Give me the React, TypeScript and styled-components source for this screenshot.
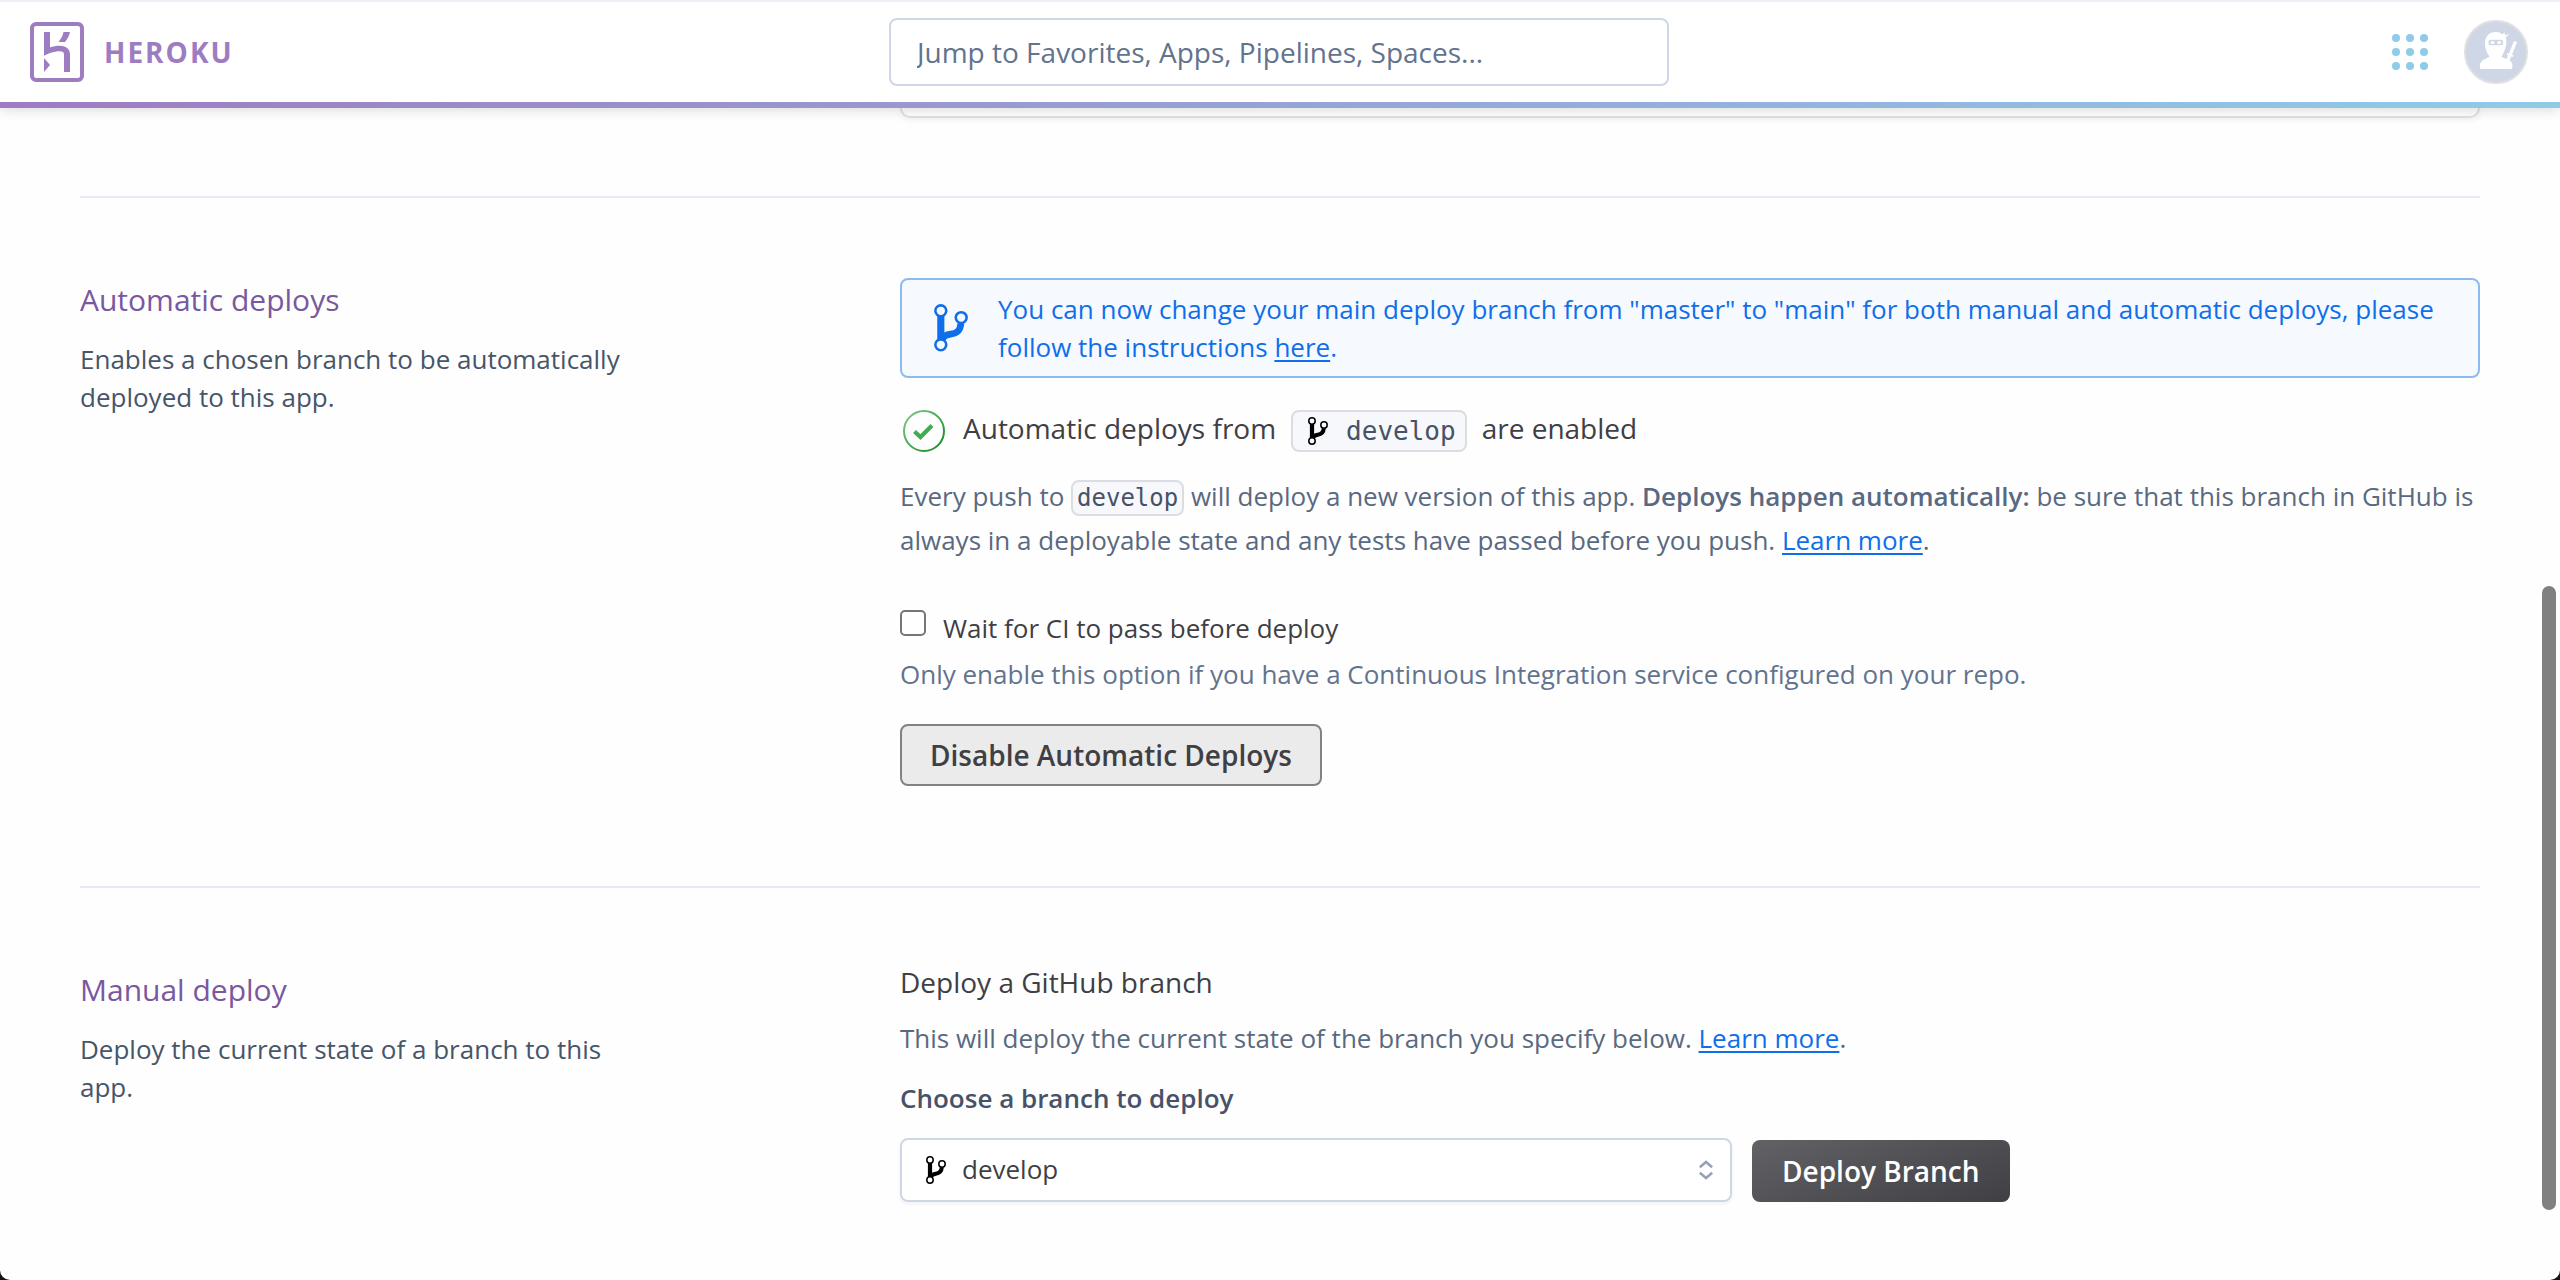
import React from "react";
import styled, { createGlobalStyle } from "styled-components";

const sans = `"Open Sans", "Noto Sans", sans-serif`;
const mono = `"DejaVu Sans Mono", monospace`;

const GlobalStyle = createGlobalStyle`
  *, *::before, *::after { box-sizing: border-box; }
  html { background: #101414; }
  body { margin: 0; font: 400 26px/38px ${sans}; color: #3f3f44; }
  h2, h3, p { margin: 0; font-weight: 400; }
`;

const Shell = styled.div`
  min-height: 100vh;
  background: #fefefe;
  border-radius: 0 0 10px 10px;
`;

const TopBar = styled.header`
  position: sticky;
  top: 0;
  z-index: 2;
  display: grid;
  grid-template-columns: 1fr minmax(0, 780px) 1fr;
  align-items: center;
  height: 108px;
  padding: 0 32px 0 30px;
  background: #fff;
  border-top: 2px solid #edf1f7;
  border-bottom: 6px solid;
  border-image: linear-gradient(90deg, #9e7cc1, #8fcbe8) 0 0 6 0;
  box-shadow: 0 2px 12px rgba(0, 0, 0, 0.14);
`;

const TopRule = styled.div`
  height: 2px;
  background: #edf1f7;
  position: absolute;
  top: -2px;
  left: 0;
  right: 0;
`;

const Brand = styled.a`
  display: flex;
  align-items: center;
  gap: 20px;
  color: #9e7cc1;
  text-decoration: none;
  font-size: 28px;
  font-weight: 700;
  letter-spacing: 2px;
`;

const Search = styled.input`
  width: 100%;
  height: 68px;
  padding: 0 26px;
  border: 2px solid #cfd7e6;
  border-radius: 8px;
  background: #fff;
  color: #3f3f44;
  font: 400 28px/38px ${sans};
  &::placeholder { color: #62738d; opacity: 1; }
`;

const Tools = styled.div`
  display: flex;
  justify-content: flex-end;
  align-items: center;
  gap: 36px;
`;

const IconButton = styled.button`
  display: block;
  padding: 0;
  border: 0;
  background: none;
  svg { display: block; }
`;

const Content = styled.main`
  padding: 0 80px;
`;

const Columns = styled.div`
  display: grid;
  grid-template-columns: 41fr 79fr;
`;

const CardEnd = styled.div`
  grid-column: 2;
  height: 10px;
  margin-bottom: 78px;
  border: 2px solid #dde1e6;
  border-top: 0;
  border-radius: 0 0 10px 10px;
  box-shadow: 0 2px 6px rgba(0, 0, 0, 0.06);
`;

const Section = styled(Columns).attrs({ as: "section" })`
  border-top: 2px solid #e6eaf4;
  padding: 80px 0 100px;
  &:last-child { padding-bottom: 60px; }
`;

const Intro = styled.div`
  max-width: 560px;
  color: #475569;
`;

const Title = styled.h2`
  margin-bottom: 18px;
  color: #79589f;
  font-size: 30px;
  line-height: 44px;
`;

const Notice = styled.div`
  display: flex;
  align-items: center;
  gap: 30px;
  margin-bottom: 32px;
  padding: 10px 32px;
  border: 2px solid #8ebbef;
  border-radius: 8px;
  background: #f6f9fe;
  color: #0f6fea;
  svg { flex: none; }
`;

const Link = styled.a`
  color: #0f6fea;
  text-decoration: underline;
  text-decoration-thickness: 2px;
  text-underline-offset: 3px;
`;

const Status = styled.div`
  display: flex;
  align-items: center;
  gap: 18px;
  padding-left: 3px;
  svg { flex: none; }
`;

const StatusText = styled.h3`
  display: flex;
  align-items: flex-start;
  gap: 15px;
  font-size: 28px;
  line-height: 36px;
`;

const BranchTag = styled.code`
  display: inline-flex;
  align-items: center;
  gap: 18px;
  padding: 0 9px 0 15px;
  border: 2px solid #dcdde1;
  border-radius: 8px;
  background: #f7f8fb;
  color: #475268;
  font: 400 26px/38px ${mono};
`;

const Code = styled.code`
  display: inline-block;
  padding: 0 4px;
  border: 2px solid #dcdde1;
  border-radius: 8px;
  background: #f7f8fb;
  color: #475268;
  font: 400 24px/32px ${mono};
`;

const Copy = styled.p<{ $top: number }>`
  margin-top: ${(p) => p.$top}px;
  color: #596981;
  line-height: 44px;
  strong { font-weight: 600; }
`;

const CheckRow = styled.label`
  display: flex;
  align-items: flex-start;
  gap: 17px;
  width: fit-content;
  margin-top: 48px;
  line-height: 36px;
`;

const Checkbox = styled.input`
  appearance: none;
  width: 26px;
  height: 26px;
  margin: 0;
  border: 2px solid #767676;
  border-radius: 5px;
  background: #fff;
  &:checked { background: #79589f; }
`;

const Help = styled.p`
  margin: 10px 0 32px;
  color: #62738d;
  line-height: 36px;
`;

const Button = styled.button<{ $primary?: boolean }>`
  display: block;
  height: 62px;
  padding: 0 ${(p) => (p.$primary ? 30 : 28)}px;
  border: ${(p) => (p.$primary ? "0" : "2px solid #828284")};
  border-radius: 8px;
  background: ${(p) => (p.$primary ? "linear-gradient(160deg, #626266, #3f3f44)" : "#ebebeb")};
  color: ${(p) => (p.$primary ? "#fff" : "#3f3f44")};
  font: 600 28px/38px ${sans};
  white-space: nowrap;
`;

const SubTitle = styled.h3`
  font-size: 28px;
  line-height: 28px;
`;

const FieldLabel = styled.label`
  display: block;
  margin: 20px 0 22px;
  color: #475268;
  font-weight: 600;
  line-height: 36px;
`;

const FieldRow = styled.div`
  display: flex;
  align-items: flex-end;
  gap: 20px;
`;

const SelectBox = styled.div`
  position: relative;
  flex: 0 1 832px;
`;

const SelectIcon = styled.span<{ $end?: boolean }>`
  position: absolute;
  top: 0;
  bottom: 0;
  ${(p) => (p.$end ? "right: 19px" : "left: 26px")};
  display: flex;
  align-items: center;
  pointer-events: none;
`;

const Select = styled.select`
  appearance: none;
  display: block;
  width: 100%;
  height: 64px;
  padding: 0 60px 2px 60px;
  border: 2px solid #cfd7e6;
  border-radius: 8px;
  background: #fff;
  box-shadow: 0 2px 4px rgba(0, 0, 0, 0.05);
  color: #3f3f44;
  font: 400 26px/38px ${sans};
`;

const ScrollThumb = styled.div`
  position: fixed;
  z-index: 1;
  right: 4px;
  top: 586px;
  bottom: 70px;
  width: 14px;
  border-radius: 7px;
  background: #808080;
`;

function BranchIcon({ size = 20, color = "#000" }: { size?: number; color?: string }) {
  return (
    <svg width={size} height={size * 1.4} viewBox="0 0 20 28" fill="none" stroke={color} aria-hidden="true">
      <path d="M4 7v14" strokeWidth="4.2" />
      <path d="M15.8 11.4c-.3 4.6-2.6 5.9-6 6.3-2.6.3-4.2 1.2-5 3.1" strokeWidth="4" />
      <circle cx="4" cy="4" r="3.2" strokeWidth="1.5" />
      <circle cx="16" cy="8" r="3.2" strokeWidth="1.5" />
      <circle cx="4" cy="24" r="3.2" strokeWidth="1.5" />
    </svg>
  );
}

function HerokuMark() {
  return (
    <svg width="54" height="60" viewBox="0 0 54 60" fill="#9e7cc1" aria-hidden="true">
      <rect x="2" y="2" width="50" height="56" rx="4" fill="none" stroke="#9e7cc1" strokeWidth="4" />
      <path d="M14 10h6v15.4c2.7-.9 6.4-1.6 10-1.6 6.5 0 10 3.7 10 8.6V50h-6V32.6c0-2.2-1.4-3.3-4.5-3.3-6 0-11.7 2.6-15.5 4.5z" />
      <path d="M14 36l6 7-6 7z" />
      <path d="M33.5 10H40c-.7 3.7-2.5 7-5 10h-6.5c2.6-3.2 4.300-6.400 5-10z" />
    </svg>
  );
}

function AppsIcon() {
  return (
    <svg width="36" height="36" viewBox="0 0 36 36" fill="#8fcbe8" aria-hidden="true">
      {[4, 18, 32].map((y) => [4, 18, 32].map((x) => <circle key={`${x}-${y}`} cx={x} cy={y} r="4" />))}
    </svg>
  );
}

function NinjaAvatar() {
  return (
    <svg width="64" height="64" viewBox="0 0 64 64" aria-hidden="true">
      <circle cx="32" cy="32" r="31" fill="#cfd7e6" stroke="#dfdfe0" strokeWidth="2" />
      <g fill="#fff">
        <path d="M21 23c0-6.500 4.500-11 10.500-11 3 0 5 .8 7 2.500l1.800-2.200.7 2.700 4.600-.6-4 2.600c.8 1.800 1 4 .6 7C41.500 29 40 33 37.500 36.500c2 2 8.500 2.500 10.500 6.500.5 1.200.5 3 .3 4.500-.2 1-.8 1.500-1.800 1.500h-29c-1 0-1.500-.5-1.500-1.500 0-1.500-.2-3.300.5-4.500 2-4 7-4.500 9-6.500-3-4-4.500-8-4.500-13.500z" />
        <path d="M50 21l3 1.200-5 12.500 1.500.8-.6 1.500-1.700-.6-1.700 4.300-3-1.300 1.600-4-1.500-.6.600-1.500 1.600.5z" />
      </g>
      <rect x="24.5" y="19.8" width="14.5" height="5.4" rx="2" fill="#cfd7e6" />
      <ellipse cx="28.5" cy="22.5" rx="2" ry="1.5" fill="#fff" />
      <ellipse cx="35.2" cy="22.5" rx="2" ry="1.5" fill="#fff" />
    </svg>
  );
}

function CheckCircle() {
  return (
    <svg width="42" height="42" viewBox="0 0 42 42" fill="none" aria-hidden="true">
      <defs>
        <linearGradient id="ring" x1="0" y1="0" x2="1" y2="1">
          <stop offset="0" stopColor="#7fcb8b" />
          <stop offset="1" stopColor="#12881b" />
        </linearGradient>
      </defs>
      <circle cx="21" cy="21" r="20" stroke="url(#ring)" strokeWidth="2" />
      <path d="M11.5 21.5l6 5.5L29 15.5" stroke="#43ab50" strokeWidth="4.2" />
    </svg>
  );
}

export default function App() {
  return (
    <>
      <GlobalStyle />
      <Shell>
        <TopBar>
          <TopRule />
          <Brand href="#">
            <HerokuMark />
            HEROKU
          </Brand>
          <Search type="text" aria-label="Jump to" placeholder="Jump to Favorites, Apps, Pipelines, Spaces..." />
          <Tools>
            <IconButton type="button" aria-label="Apps">
              <AppsIcon />
            </IconButton>
            <IconButton type="button" aria-label="Account">
              <NinjaAvatar />
            </IconButton>
          </Tools>
        </TopBar>

        <Content>
          <Columns>
            <CardEnd />
          </Columns>

          <Section>
            <Intro>
              <Title>Automatic deploys</Title>
              <p>Enables a chosen branch to be automatically deployed to this app.</p>
            </Intro>
            <div>
              <Notice>
                <BranchIcon size={34} color="#0f6fea" />
                <p>
                  You can now change your main deploy branch from "master" to "main" for both manual and automatic
                  deploys, please follow the instructions <Link href="#">here</Link>.
                </p>
              </Notice>
              <Status>
                <CheckCircle />
                <StatusText>
                  <span>Automatic deploys from</span>
                  <BranchTag>
                    <BranchIcon />
                    develop
                  </BranchTag>
                  <span>are enabled</span>
                </StatusText>
              </Status>
              <Copy $top={22}>
                Every push to <Code>develop</Code> will deploy a new version of this app.{" "}
                <strong>Deploys happen automatically:</strong> be sure that this branch in GitHub is always in a
                deployable state and any tests have passed before you push. <Link href="#">Learn more</Link>.
              </Copy>
              <CheckRow>
                <Checkbox type="checkbox" />
                Wait for CI to pass before deploy
              </CheckRow>
              <Help>Only enable this option if you have a Continuous Integration service configured on your repo.</Help>
              <Button type="button">Disable Automatic Deploys</Button>
            </div>
          </Section>

          <Section>
            <Intro>
              <Title>Manual deploy</Title>
              <p>Deploy the current state of a branch to this app.</p>
            </Intro>
            <div>
              <SubTitle>Deploy a GitHub branch</SubTitle>
              <Copy $top={20}>
                This will deploy the current state of the branch you specify below. <Link href="#">Learn more</Link>.
              </Copy>
              <FieldLabel htmlFor="branch">Choose a branch to deploy</FieldLabel>
              <FieldRow>
                <SelectBox>
                  <Select id="branch" defaultValue="develop">
                    <option value="develop">develop</option>
                  </Select>
                  <SelectIcon>
                    <BranchIcon />
                  </SelectIcon>
                  <SelectIcon $end>
                    <svg width="14" height="20" viewBox="0 0 14 20" fill="none" stroke="#96a3b6" strokeWidth="2.6" aria-hidden="true">
                      <path d="M.8 7.3L7 2l6.200 5.300M.8 12.700L7 18l6.200-5.300" />
                    </svg>
                  </SelectIcon>
                </SelectBox>
                <Button type="button" $primary>
                  Deploy Branch
                </Button>
              </FieldRow>
            </div>
          </Section>
        </Content>
        <ScrollThumb />
      </Shell>
    </>
  );
}
